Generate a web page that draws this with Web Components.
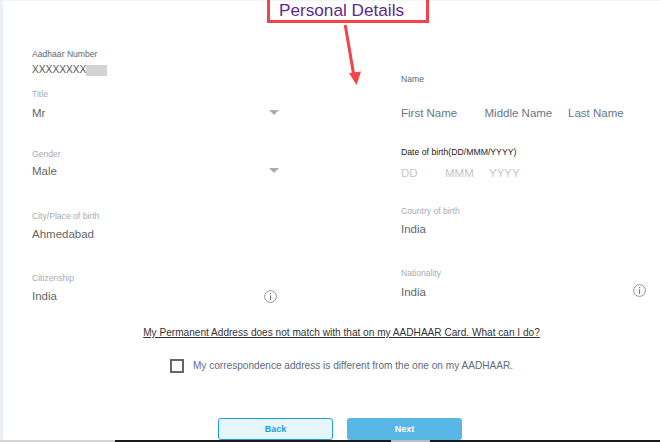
<!DOCTYPE html>
<html lang="en"><head><meta charset="utf-8"><title>Personal Details</title>
<style>
html,body{margin:0;padding:0;background:#fff;overflow:hidden;height:442px}
body{font-family:"Liberation Sans",Arial,sans-serif}
</style></head>
<body>
<x-page>
  <x-heading slot="heading">Personal Details</x-heading>
  <x-annotation slot="annotation"></x-annotation>

  <x-field slot="left" label="Aadhaar Number" tone="dark" top="48" gap="2" kind="aadhaar">XXXXXXXX</x-field>
  <x-field slot="left" label="Title" top="10" gap="5" kind="select">Mr</x-field>
  <x-field slot="left" label="Gender" top="27" gap="3" kind="select">Male</x-field>
  <x-field slot="left" label="City/Place of birth" top="31" gap="4">Ahmedabad</x-field>
  <x-field slot="left" label="Citizenship" top="30" gap="4" kind="info">India</x-field>

  <x-field slot="right" label="Name" tone="dark" top="73" gap="20">
    <x-parts cols="83.5px" tone="name"><span>First Name</span><span>Middle Name</span><span>Last Name</span></x-parts>
  </x-field>
  <x-field slot="right" label="Date of birth(DD/MMM/YYYY)" tone="black" top="25" gap="7">
    <x-parts cols="44px" tone="hint"><span>DD</span><span>MMM</span><span>YYYY</span></x-parts>
  </x-field>
  <x-field slot="right" label="Country of birth" top="24" gap="4">India</x-field>
  <x-field slot="right" label="Nationality" top="30" gap="5" kind="info" raised>India</x-field>

  <x-link slot="link">My Permanent Address does not match with that on my AADHAAR Card. What can I do?</x-link>
  <x-check slot="check">My correspondence address is different from the one on my AADHAAR.</x-check>
  <x-button slot="actions" variant="ghost">Back</x-button>
  <x-button slot="actions" variant="solid">Next</x-button>
</x-page>
<script>
function def(name, css, html, setup){
  customElements.define(name, class extends HTMLElement{
    constructor(){super();this.attachShadow({mode:'open'});}
    connectedCallback(){
      this.shadowRoot.innerHTML='<style>'+css+'</style>'+(typeof html==='function'?html(this):html);
      if(setup)setup(this);
    }
  });
}
const infoIcon='<svg width="13" height="13" viewBox="0 0 13 13" fill="none"><circle cx="6.5" cy="6.5" r="5.9" stroke="#8a8a8a" stroke-width=".9"/><rect x="6" y="5.4" width="1.1" height="4.6" fill="#777"/><rect x="6" y="3" width="1.1" height="1.2" fill="#777"/></svg>';

def('x-page',`
:host{display:flex;flex-direction:column;width:660px;height:442px;box-sizing:border-box;background:#fff;position:relative;overflow:hidden}
.frame{flex:1;display:flex;min-height:0}
.strip{width:3px;background:#eceffa;flex:none}
.main{flex:1;display:flex;flex-direction:column;border-top:1px solid #f4f4f6;box-sizing:border-box;min-width:0}
.head{display:flex;justify-content:center;padding-left:20px;height:0}
.cols{display:grid;grid-template-columns:369px 1fr;padding-left:29px;height:304px;box-sizing:border-box;margin-top:-1px}
.col{display:flex;flex-direction:column;min-width:0}
.center{display:flex;justify-content:center;padding-left:20px}
.link{margin-top:21px}
.check{margin-top:17px}
.actions{margin-top:44px;gap:14px;padding-left:17px}
.bottom{display:flex;height:2px;flex:none}
.bottom i{display:block;height:2px}
`,`
<div class="frame"><div class="strip"></div><div class="main">
  <div class="head"><slot name="heading"></slot></div>
  <div class="cols"><div class="col"><slot name="left"></slot></div><div class="col"><slot name="right"></slot></div></div>
  <div class="center link"><slot name="link"></slot></div>
  <div class="center check"><slot name="check"></slot></div>
  <div class="center actions"><slot name="actions"></slot></div>
</div></div>
<div class="bottom"><i style="width:115px;background:#d4d4d4"></i><i style="width:276px;background:#1a1a1a"></i><i style="width:39px;background:#bdbdbd"></i><i style="flex:1;background:#1a1a1a"></i></div>
<slot name="annotation"></slot>`);

def('x-heading',`:host{display:block;font-size:17.2px;line-height:18px;color:#5b2a8c;white-space:nowrap;height:18px}`,'<slot></slot>');

def('x-annotation',`
:host{display:block;position:absolute;left:0;top:0;width:660px;height:100px;pointer-events:none}
.box{position:absolute;left:267px;top:-4px;width:162px;height:27px;box-sizing:border-box;border:3px solid #f4444a}
svg{position:absolute;left:340px;top:20px}
`,`<div class="box"></div>
<svg width="26" height="68" viewBox="340 20 26 68" fill="none"><path d="M345.2 25 L353.6 74" stroke="#f4444a" stroke-width="3"/><path d="M349 73 L361 71.5 L356.5 85 Z" fill="#f4444a"/></svg>`);

def('x-field',`
:host{display:block;font-size:11.5px;color:#666}
.l{display:block;font-size:8.6px;line-height:12px;color:#a7abb3;white-space:nowrap}
:host([tone=dark]) .l{color:#5c6878}
:host([tone=black]) .l{color:#222;font-size:8.7px}
.v{display:flex;align-items:center;line-height:16px;height:16px;width:246px;justify-content:space-between;position:relative}
:host([kind=aadhaar]) .v{font-size:10.2px;justify-content:flex-start;color:#555}
.mask{width:21px;height:11px;background:#d3d3d3;flex:none}
.caret{width:0;height:0;border-left:5px solid transparent;border-right:5px solid transparent;border-top:5px solid #a9adb6;flex:none;margin-top:-2px;margin-right:-1px}
.info{display:flex;flex:none;margin-right:1px}
:host([raised]) .info{margin-bottom:4px}
`,t=>{
  const k=t.getAttribute('kind');
  let x='';
  if(k==='select')x='<span class="caret"></span>';
  if(k==='info')x='<span class="info">'+infoIcon+'</span>';
  if(k==='aadhaar')x='<span class="mask"></span>';
  return '<span class="l">'+t.getAttribute('label')+'</span><div class="v" style="margin-top:'+t.getAttribute('gap')+'px"><slot></slot>'+x+'</div>';
},t=>{t.style.marginTop=t.getAttribute('top')+'px';});

def('x-parts',`
:host{display:grid;font-size:11.5px;white-space:nowrap}
:host([tone=name]){color:#66768a}
:host([tone=hint]){color:#c6c6c6}
`,'<slot></slot>',t=>{t.style.gridTemplateColumns='repeat(3,'+t.getAttribute('cols')+')';});

def('x-link',`:host{display:block;font-size:10.1px;line-height:16px;color:#333;text-decoration:underline;white-space:nowrap}`,'<slot></slot>');

def('x-check',`
:host{display:flex;align-items:center;gap:9px;font-size:10.1px;line-height:16px;color:#5d6c7e;white-space:nowrap}
.b{width:14px;height:14px;box-sizing:border-box;border:2px solid #666;background:#fff;flex:none}
`,'<span class="b"></span><slot></slot>');

def('x-button',`
:host{display:flex;align-items:center;justify-content:center;width:115px;height:22px;box-sizing:border-box;border-radius:3px;font-size:9px;font-weight:700}
:host([variant=ghost]){background:#e7f5fc;border:1px solid #1c9fdc;color:#1c9fdc}
:host([variant=solid]){background:#58b7e6;color:#fff}
`,'<slot></slot>');
</script>
</body></html>
